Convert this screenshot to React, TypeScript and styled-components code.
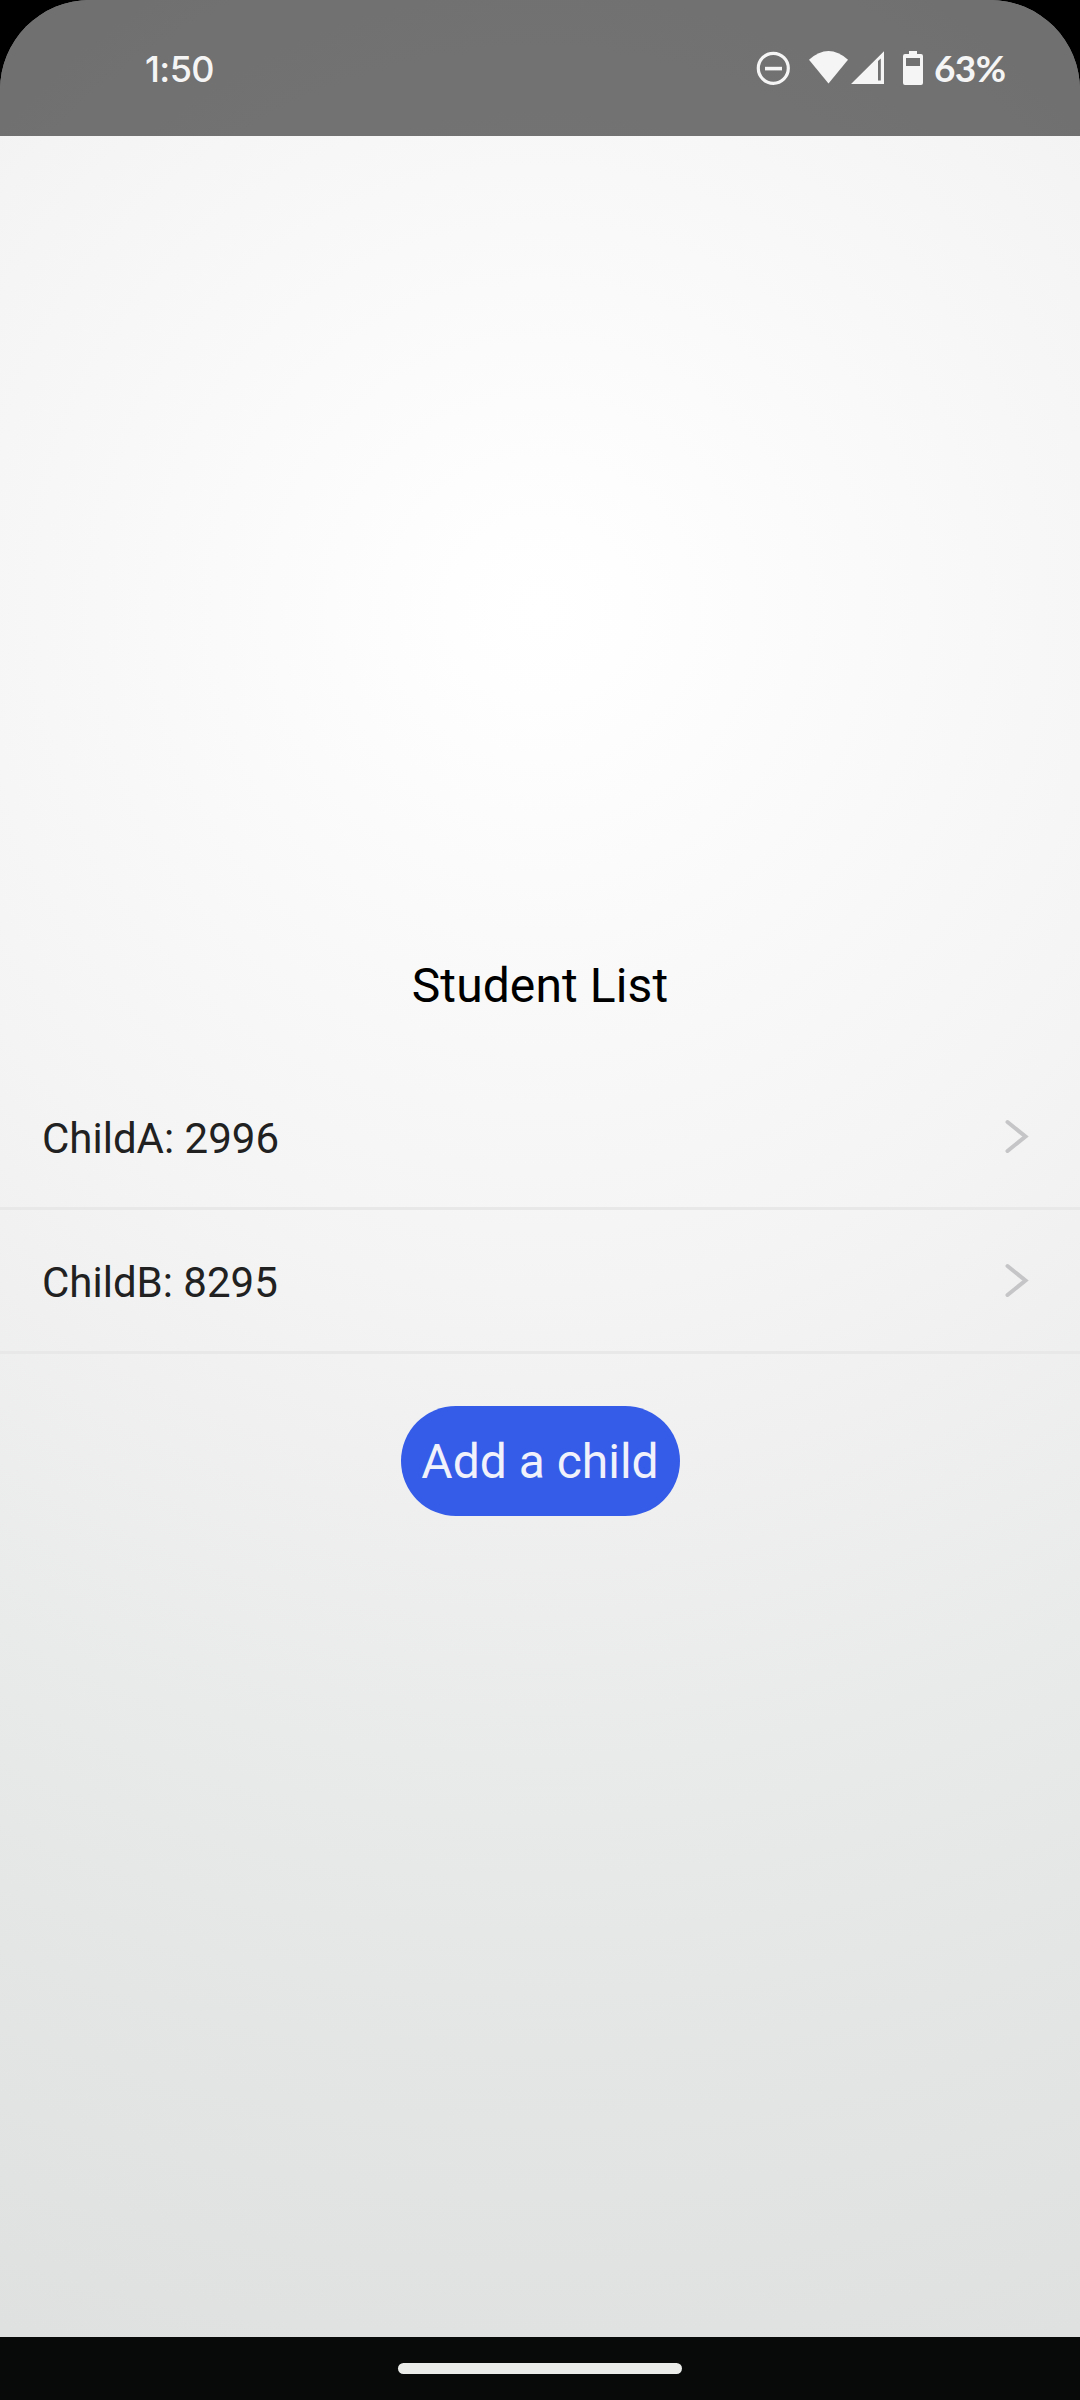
import React from "react";
import styled, { createGlobalStyle } from "styled-components";

const GlobalStyle = createGlobalStyle`
  *, *::before, *::after { box-sizing: border-box; }
  body { margin: 0; background: #000; }
`;

const Screen = styled.div`
  width: 1080px;
  height: 2400px;
  display: flex;
  flex-direction: column;
  overflow: hidden;
  border-radius: 90px 90px 0 0;
  font-family: Roboto, "Liberation Sans", sans-serif;
  background: radial-gradient(
    circle at 540px 610px,
    #ffffff 0px,
    #fefefe 90px,
    #f8f8f8 440px,
    #f4f4f4 680px,
    #f0f0f0 860px,
    #e9eaea 1150px,
    #e4e6e5 1440px,
    #dfe1e0 1800px
  );
`;

const StatusBar = styled.header`
  height: 136px;
  flex: none;
  display: flex;
  justify-content: space-between;
  align-items: center;
  padding: 0 74px 0 145px;
  background: rgba(0, 0, 0, 0.537);
  color: #f5f5f5;
  font-family: Lato, sans-serif;
  font-size: 37px;
  font-weight: 700;
  line-height: 44px;
`;

const Clock = styled.time`
  padding-top: 1px;
  font-family: Inter, sans-serif;
  font-size: 36px;
  font-weight: 500;
  letter-spacing: -0.6px;
`;

const StatusIcons = styled.div`
  display: flex;
  align-items: center;
`;

const Glyphs = styled.svg`
  display: block;
  width: 168px;
  height: 36px;
  margin-right: 10px;
`;

const Percent = styled.span`
  width: 72px;
  white-space: nowrap;
  letter-spacing: -0.6px;
`;

const Content = styled.main`
  flex: 1;
  display: flex;
  flex-direction: column;
  align-items: center;
  justify-content: center;
  padding-bottom: 3px;
`;

const Title = styled.h1`
  margin: 0 0 50px;
  padding-top: 2px;
  color: #000;
  font-size: 48px;
  font-weight: 400;
  line-height: 60px;
  letter-spacing: 0.1px;
`;

const List = styled.ul`
  width: 100%;
  margin: 0 0 52px;
  padding: 0;
  list-style: none;
`;

const Row = styled.li`
  height: 144px;
  display: flex;
  align-items: center;
  justify-content: space-between;
  padding: 0 50px 0 42px;
  border-bottom: 3px solid #e8e8e8;
  color: #212121;
  font-size: 42px;
  line-height: 50px;
`;

const Label = styled.span`
  padding-top: 4px;
`;

const Chevron = styled.svg`
  display: block;
  width: 26px;
  height: 36px;
`;

const AddButton = styled.button`
  width: 279px;
  height: 110px;
  padding: 2px 0 0;
  border: 0;
  border-radius: 55px;
  background: #345ce9;
  color: #f0f1fa;
  font: 400 48px/60px Roboto, sans-serif;
  white-space: nowrap;
`;

const NavBar = styled.footer`
  height: 63px;
  flex: none;
  display: flex;
  justify-content: center;
  padding-top: 26px;
  background: #080a09;
`;

const HomeHandle = styled.div`
  width: 284px;
  height: 11px;
  border-radius: 6px;
  background: #eaecea;
`;

const children = [
  { name: "ChildA", code: 2996 },
  { name: "ChildB", code: 8295 },
];

export default function App() {
  return (
    <>
      <GlobalStyle />
      <Screen>
        <StatusBar>
          <Clock>1:50</Clock>
          <StatusIcons>
            <Glyphs viewBox="756 50 168 36" fill="#f5f5f5">
              <circle cx="773.3" cy="68.3" r="15" fill="none" stroke="#f5f5f5" strokeWidth="3.2" />
              <rect x="765" y="66.8" width="17" height="3.6" />
              <path d="M809 59.8Q828.5 42.4 848 59.8L828.5 83.4Z" />
              <path fillRule="evenodd" d="M851 84L884 51.3V84ZM878 61V80.6H880.8V58.5Z" />
              <path
                fillRule="evenodd"
                d="M909 51H917V54H921Q923 54 923 56V83Q923 85 921 85H905Q903 85 903 83V56Q903 54 905 54H909ZM906 58V66H920V58Z"
              />
            </Glyphs>
            <Percent>63%</Percent>
          </StatusIcons>
        </StatusBar>
        <Content>
          <Title>Student List</Title>
          <List>
            {children.map((child) => (
              <Row key={child.name}>
                <Label>
                  {child.name}: {child.code}
                </Label>
                <Chevron viewBox="0 0 26 36" fill="none" stroke="#c5c5c7" strokeWidth="4">
                  <path d="M3.5 3L21.5 17.5L3.5 32" strokeLinecap="round" strokeLinejoin="miter" />
                </Chevron>
              </Row>
            ))}
          </List>
          <AddButton type="button">Add a child</AddButton>
        </Content>
        <NavBar>
          <HomeHandle />
        </NavBar>
      </Screen>
    </>
  );
}
